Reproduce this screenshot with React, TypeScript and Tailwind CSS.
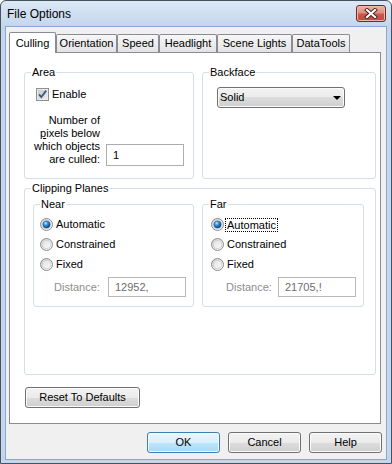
import React from "react";

function Radio({ checked }: { checked?: boolean }) {
  return (
    <svg width="13" height="13" viewBox="0 0 13 13" className="shrink-0">
      <defs>
        <linearGradient id="rgOuter" x1="0" y1="0" x2="1" y2="1">
          <stop offset="0" stopColor="#cfcfcf" />
          <stop offset="1" stopColor="#fbfbfb" />
        </linearGradient>
        <linearGradient id="rgInner" x1="0" y1="0" x2="1" y2="1">
          <stop offset="0" stopColor="#e2e2e2" />
          <stop offset="1" stopColor="#f9f9f9" />
        </linearGradient>
        <radialGradient id="rgDot" cx="0.38" cy="0.32" r="0.75">
          <stop offset="0" stopColor="#c4f0ff" />
          <stop offset="0.35" stopColor="#3a9ae4" />
          <stop offset="0.8" stopColor="#0f4f96" />
          <stop offset="1" stopColor="#0a3466" />
        </radialGradient>
      </defs>
      <circle cx="6.5" cy="6.5" r="6" fill="url(#rgOuter)" stroke="#8c8e90" />
      <circle cx="6.5" cy="6.5" r="4.2" fill="url(#rgInner)" stroke="#c2c2c2" strokeWidth="0.6" />
      {checked && <circle cx="6.5" cy="6.5" r="3.6" fill="url(#rgDot)" stroke="#1b4d86" strokeWidth="0.5" />}
    </svg>
  );
}

function Checkbox() {
  return (
    <svg width="13" height="13" viewBox="0 0 13 13" className="shrink-0">
      <defs>
        <linearGradient id="cbFill" x1="0" y1="0" x2="1" y2="1">
          <stop offset="0" stopColor="#c8c8c8" />
          <stop offset="1" stopColor="#ececec" />
        </linearGradient>
      </defs>
      <rect x="0.5" y="0.5" width="12" height="12" fill="#ebebeb" stroke="#8e8f8f" />
      <rect x="2" y="2" width="9" height="9" fill="url(#cbFill)" />
      <path d="M3 6.3 L5.3 9 L10.2 2.6" stroke="#3e5688" strokeWidth="1.8" fill="none" />
    </svg>
  );
}

function Group({ title, className, children }: { title: string; className?: string; children?: React.ReactNode }) {
  return (
    <fieldset className={`min-w-0 rounded-[3px] border border-[#d5dfe5] ${className ?? ""}`}>
      <legend className="ml-[6px] px-[1px] leading-[13px]">{title}</legend>
      {children}
    </fieldset>
  );
}

function Field({ value, disabled }: { value: string; disabled?: boolean }) {
  return (
    <div
      className={`flex h-[20px] w-[78px] shrink-0 items-center border bg-white pl-[6px] ${
        disabled ? "border-[#b8b8b8] text-[#6d6d6d]" : "border-[#abadb3] text-black"
      }`}
    >
      {value}
    </div>
  );
}

function Btn({ label, className, primary }: { label: string; className?: string; primary?: boolean }) {
  return (
    <div
      className={`flex h-[21px] items-center justify-center rounded-[3px] border ${
        primary
          ? "border-[#3c7fb1] bg-[linear-gradient(#eaf6fd_0%,#d9f0fc_50%,#bee6fd_50%,#a7d9f5_100%)] shadow-[inset_0_0_0_1px_#f4fbff]"
          : "border-[#707070] bg-[linear-gradient(#f2f2f2_0%,#ebebeb_50%,#dddddd_50%,#cfcfcf_100%)] shadow-[inset_0_0_0_1px_#fbfbfb]"
      } ${className ?? ""}`}
    >
      {label}
    </div>
  );
}

export default function App() {
  return (
    <div className="h-[464px] w-[392px] font-['Liberation_Sans',Arial,sans-serif] text-[11px] leading-[13px] text-black">
      <div className="flex h-full w-full flex-col rounded-t-[6px] border border-[#46525f] bg-[linear-gradient(#dbe8f6_0px,#c3d6ec_26px,#c3d6ec_100%)] px-[4px] pb-[3px]">
        {/* Title bar */}
        <div className="flex h-[25px] shrink-0 items-start justify-between">
          <div className="pl-[2px] pt-[6px] text-[12px] leading-[15px] text-black">File Options</div>
          <div className="mr-[1px] mt-[4px] flex h-[17px] w-[30px] items-center justify-center rounded-[3px] border border-[#6e2a24] bg-[linear-gradient(#edb4a8_0%,#dc8f80_45%,#c95a4b_55%,#c04a3c_100%)] shadow-[inset_0_0_0_1px_#f0b5aa]">
            <svg width="14" height="11" viewBox="0 0 14 11">
              <path d="M3 2 L11 9 M11 2 L3 9" stroke="#4a1f1a" strokeWidth="4" strokeLinecap="square" />
              <path d="M3 2 L11 9 M11 2 L3 9" stroke="#ffffff" strokeWidth="2.2" strokeLinecap="square" />
            </svg>
          </div>
        </div>

        {/* Client area */}
        <div className="flex flex-1 flex-col border border-[#86a9d2] bg-[#f0f0f0]">
          {/* Tabs */}
          <div className="flex h-[25px] shrink-0 items-end pl-[3px]">
            <div className="relative z-10 -mb-px flex h-[21px] w-[47px] items-center justify-center rounded-t-[2px] border border-b-0 border-[#898c95] bg-white">
              Culling
            </div>
            <div className="flex h-[18px] w-[61px] items-center justify-center rounded-t-[2px] border border-b-0 border-[#898c95] bg-[linear-gradient(#f7f7f7,#e3e3e3)]">
              Orientation
            </div>
            <div className="flex h-[18px] w-[42px] items-center justify-center rounded-t-[2px] border border-b-0 border-[#898c95] bg-[linear-gradient(#f7f7f7,#e3e3e3)]">
              Speed
            </div>
            <div className="flex h-[18px] w-[58px] items-center justify-center rounded-t-[2px] border border-b-0 border-[#898c95] bg-[linear-gradient(#f7f7f7,#e3e3e3)]">
              Headlight
            </div>
            <div className="flex h-[18px] w-[75px] items-center justify-center rounded-t-[2px] border border-b-0 border-[#898c95] bg-[linear-gradient(#f7f7f7,#e3e3e3)]">
              Scene Lights
            </div>
            <div className="flex h-[18px] w-[58px] items-center justify-center rounded-t-[2px] border border-b-0 border-[#898c95] bg-[linear-gradient(#f7f7f7,#e3e3e3)]">
              DataTools
            </div>
          </div>

          {/* Tab panel */}
          <div className="ml-[3px] flex h-[372px] w-[372px] shrink-0 flex-col border border-[#898c95] bg-white pl-[14px] pr-[4px] pt-[13px]">
            <div className="flex gap-[8px]">
              <Group title="Area" className="w-[170px]">
                <div className="flex items-center gap-[3px] pl-[11px] pt-[9px]">
                  <Checkbox />
                  <span>Enable</span>
                </div>
                <div className="mt-[13px] flex items-end gap-[6px] pb-[12px]">
                  <div className="w-[75px] text-right leading-[13px]">
                    Number of
                    <br />
                    <span className="underline">p</span>ixels below
                    <br />
                    which objects
                    <br />
                    are culled:
                  </div>
                  <div className="flex h-[22px] w-[78px] items-center border border-[#abadb3] bg-white pl-[6px]">1</div>
                </div>
              </Group>
              <Group title="Backface" className="w-[174px]">
                <div className="ml-[14px] mt-[8px] flex h-[21px] w-[128px] items-center justify-between rounded-[3px] border border-[#707070] bg-[linear-gradient(#f2f2f2_0%,#ebebeb_50%,#dddddd_50%,#cfcfcf_100%)] pl-[2px] pr-[3px] shadow-[inset_0_0_0_1px_#fbfbfb]">
                  <span>Solid</span>
                  <svg width="8" height="4" viewBox="0 0 8 4">
                    <path d="M0 0 H8 L4 4 Z" fill="#000" />
                  </svg>
                </div>
              </Group>
            </div>

            <Group title="Clipping Planes" className="mt-[3px] w-[352px]">
              <div className="flex gap-[8px] pb-[67px] pl-[8px] pt-[3px]">
                <Group title="Near" className="w-[161px]">
                  <div className="flex flex-col pb-[9px] pl-[6px] pr-[7px] pt-[4px]">
                    <div className="flex h-[19px] items-center gap-[3px]">
                      <Radio checked />
                      <span>Automatic</span>
                    </div>
                    <div className="flex h-[20px] items-center gap-[3px]">
                      <Radio />
                      <span>Constrained</span>
                    </div>
                    <div className="flex h-[20px] items-center gap-[3px]">
                      <Radio />
                      <span>Fixed</span>
                    </div>
                    <div className="mt-[3px] flex items-center justify-between">
                      <span className="pl-[14px] text-[#8d8d8d]">Distance:</span>
                      <Field value="12952," disabled />
                    </div>
                  </div>
                </Group>
                <Group title="Far" className="w-[162px]">
                  <div className="flex flex-col pb-[9px] pl-[8px] pr-[7px] pt-[4px]">
                    <div className="flex h-[19px] items-center gap-[3px]">
                      <Radio checked />
                      <span className="-ml-[2px] border border-dotted border-black px-[1px] leading-[12px]">Automatic</span>
                    </div>
                    <div className="flex h-[20px] items-center gap-[3px]">
                      <Radio />
                      <span>Constrained</span>
                    </div>
                    <div className="flex h-[20px] items-center gap-[3px]">
                      <Radio />
                      <span>Fixed</span>
                    </div>
                    <div className="mt-[3px] flex items-center justify-between">
                      <span className="pl-[15px] text-[#8d8d8d]">Distance:</span>
                      <Field value="21705,!" disabled />
                    </div>
                  </div>
                </Group>
              </div>
            </Group>

            <Btn label="Reset To Defaults" className="ml-[1px] mt-[12px] w-[115px]" />
          </div>

          {/* Bottom buttons */}
          <div className="mt-[8px] flex justify-end gap-[8px] pr-[4px]">
            <Btn label="OK" primary className="w-[73px]" />
            <Btn label="Cancel" className="w-[73px]" />
            <Btn label="Help" className="w-[73px]" />
          </div>
        </div>
      </div>
    </div>
  );
}
